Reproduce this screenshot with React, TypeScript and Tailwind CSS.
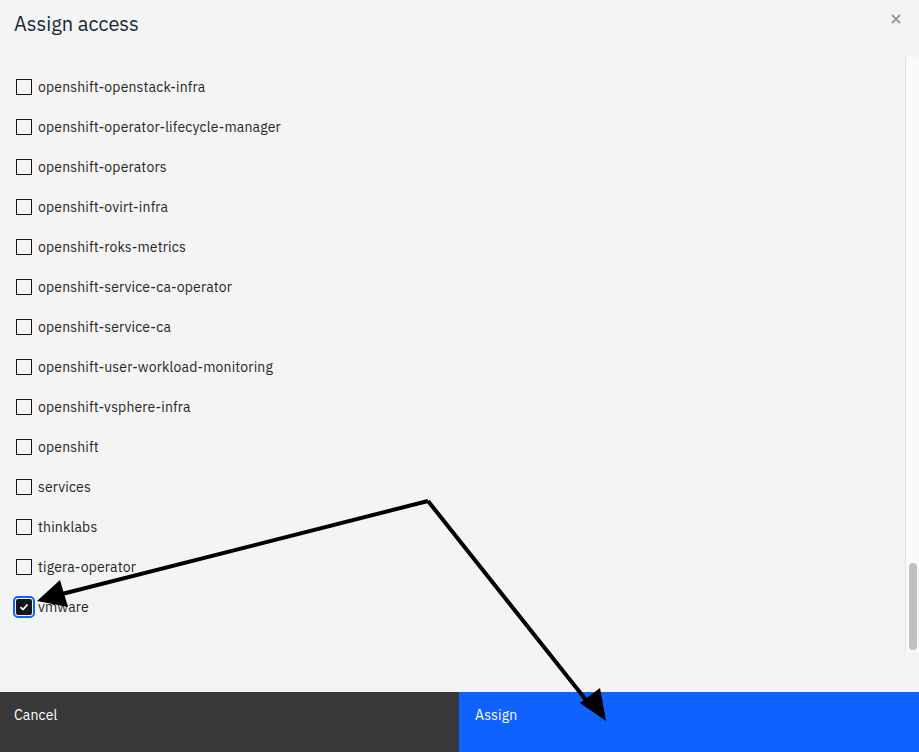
import React from "react";

const items = [
  "openshift-openstack-infra",
  "openshift-operator-lifecycle-manager",
  "openshift-operators",
  "openshift-ovirt-infra",
  "openshift-roks-metrics",
  "openshift-service-ca-operator",
  "openshift-service-ca",
  "openshift-user-workload-monitoring",
  "openshift-vsphere-infra",
  "openshift",
  "services",
  "thinklabs",
  "tigera-operator",
];

function Box({ checked }: { checked?: boolean }) {
  if (checked) {
    return (
      <span className="flex h-[16px] w-[16px] shrink-0 items-center justify-center rounded-[2px] bg-[#161616] outline-2 outline-offset-[1px] outline-[#0f62fe]">
        <svg width="10" height="8" viewBox="0 0 10 8">
          <path d="M1.5 4.2 L4 6.5 L8.5 1.5" fill="none" stroke="white" strokeWidth="1.8" />
        </svg>
      </span>
    );
  }
  return <span className="h-[16px] w-[16px] shrink-0 border border-[#161616] bg-transparent" />;
}

export default function App() {
  return (
    <div
      className="relative flex h-[752px] w-[919px] flex-col overflow-hidden bg-[#f4f4f4]"
      style={{ fontFamily: '"IBM Plex Sans", "Noto Sans", sans-serif' }}
    >
      <header className="flex h-[57px] shrink-0 items-start justify-between pl-[14px] pr-[18px] pt-[11px]">
        <h1 className="text-[20px] leading-[26px] text-[#152935]">Assign access</h1>
        <svg width="10" height="10" viewBox="0 0 10 10" className="mt-[3px]">
          <path d="M1 1 L9 9 M9 1 L1 9" stroke="#8d9aa6" strokeWidth="1.8" />
        </svg>
      </header>

      <div className="flex h-[595px] shrink-0">
        <ul className="flex-1 pt-[10px]">
          {items.map((name) => (
            <li key={name} className="flex h-[40px] items-center gap-[6px] pl-[16px] text-[14px] tracking-[0.16px] text-[#262626]">
              <Box />
              <span>{name}</span>
            </li>
          ))}
          <li className="flex h-[40px] items-center gap-[6px] pl-[16px] text-[14px] tracking-[0.16px] text-[#262626]">
            <Box checked />
            <span>vmware</span>
          </li>
        </ul>
        <div className="w-[14px] border-l border-[#e0e0e0] bg-[#fafafa] pt-[506px]">
          <div className="ml-[3px] h-[87px] w-[8px] rounded-full bg-[#c1c1c1]" />
        </div>
      </div>

      <footer className="mt-auto flex h-[60px] text-[14px] tracking-[0.16px] text-white">
        <div className="flex w-[459px] items-start bg-[#393939] pl-[14px] pt-[13px]">Cancel</div>
        <div className="flex flex-1 items-start bg-[#0f62fe] pl-[16px] pt-[13px]">Assign</div>
      </footer>

      <svg className="pointer-events-none absolute inset-0" width="919" height="752" viewBox="0 0 919 752">
        <path d="M428 501 L62 594 M428 501 L590 705" fill="none" stroke="black" strokeWidth="4" strokeLinejoin="miter" />
        <polygon points="37,601 60,580 68,607" fill="black" />
        <polygon points="606,721 580,703 600,688" fill="black" />
      </svg>
    </div>
  );
}
